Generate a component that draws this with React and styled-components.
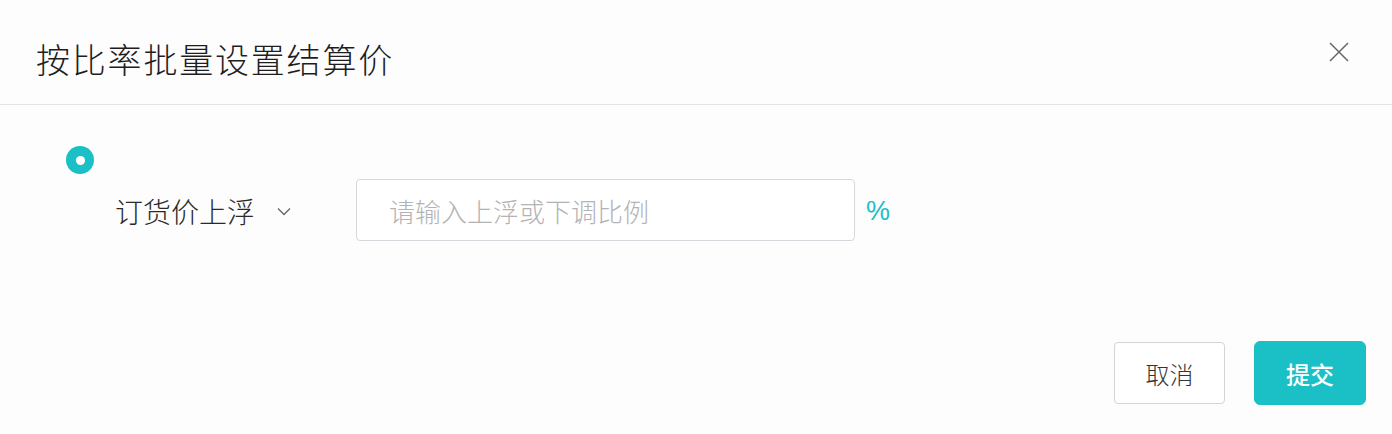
import React from "react";
import styled, { createGlobalStyle } from "styled-components";

const Global = createGlobalStyle`
  html, body { margin: 0; padding: 0; background: #fdfdfe; }
  body { font-family: "Noto Sans CJK SC", "Noto Sans", sans-serif; }
  * { box-sizing: border-box; }
`;

const TEAL = "#1bbfc6";

const Dialog = styled.div`
  width: 1392px;
  height: 434px;
  background: #fdfdfe;
  display: flex;
  flex-direction: column;
`;

const Header = styled.div`
  height: 105px;
  border-bottom: 1px solid #e4e5ea;
  display: flex;
  align-items: center;
  justify-content: space-between;
  padding: 14px 42px 0 36px;
`;

const Title = styled.h2`
  margin: 0;
  font-size: 34px;
  font-weight: 300;
  color: #1e1e1e;
  letter-spacing: 1.8px;
  line-height: 1;
`;

const Close = styled.button`
  border: 0;
  background: none;
  padding: 0;
  margin-bottom: 14px;
  width: 22px;
  height: 22px;
  display: flex;
  align-items: center;
  justify-content: center;
  cursor: pointer;
`;

const Body = styled.div`
  padding: 41px 0 0 66px;
  display: flex;
  flex-direction: column;
`;

const Radio = styled.span`
  width: 28px;
  height: 28px;
  border-radius: 50%;
  background: ${TEAL};
  display: flex;
  align-items: center;
  justify-content: center;
  &::after {
    content: "";
    width: 9px;
    height: 9px;
    border-radius: 50%;
    background: #fff;
  }
`;

const Row = styled.div`
  margin-top: 5px;
  display: flex;
  align-items: center;
`;

const Select = styled.div`
  width: 290px;
  padding-left: 49px;
  display: flex;
  align-items: center;
  gap: 22px;
  font-size: 28px;
  font-weight: 300;
  color: #2a2a2a;
  padding-top: 2px;
`;

const Input = styled.input`
  width: 499px;
  height: 62px;
  border: 1px solid #d6d7dc;
  border-radius: 4px;
  background: #fff;
  padding: 0 0 0 32px;
  font-family: inherit;
  font-size: 26px;
  font-weight: 300;
  color: #333;
  outline: none;
  &::placeholder { color: #b3b3b6; }
`;

const Unit = styled.span`
  margin-left: 11px;
  font-family: "Liberation Sans", Arial, sans-serif;
  font-size: 27px;
  color: ${TEAL};
  padding-top: 2px;
`;

const Footer = styled.div`
  margin-top: 101px;
  display: flex;
  justify-content: flex-end;
  gap: 29px;
  padding-right: 26px;
`;

const Button = styled.button`
  width: ${(p) => (p.$primary ? "112px" : "111px")};
  height: ${(p) => (p.$primary ? "64px" : "62px")};
  margin-top: ${(p) => (p.$primary ? "-1px" : "0")};
  border-radius: ${(p) => (p.$primary ? "6px" : "4px")};
  border: 1px solid ${(p) => (p.$primary ? TEAL : "#d3d4d8")};
  background: ${(p) => (p.$primary ? TEAL : "#fff")};
  color: ${(p) => (p.$primary ? "#fff" : "#333")};
  font-family: inherit;
  font-size: 24px;
  font-weight: ${(p) => (p.$primary ? 500 : 300)};
  cursor: pointer;
`;

export default function App() {
  return (
    <>
      <Global />
      <Dialog>
        <Header>
          <Title>按比率批量设置结算价</Title>
          <Close aria-label="关闭">
            <svg width="20" height="20" viewBox="0 0 20 20">
              <path d="M1 1L19 19M19 1L1 19" stroke="#666" strokeWidth="1.5" fill="none" />
            </svg>
          </Close>
        </Header>
        <Body>
          <Radio />
          <Row>
            <Select>
              <span>订货价上浮</span>
              <svg width="14" height="9" viewBox="0 0 14 9">
                <path d="M1 1.5L7 7.5L13 1.5" stroke="#666" strokeWidth="1.3" fill="none" />
              </svg>
            </Select>
            <Input placeholder="请输入上浮或下调比例" />
            <Unit>%</Unit>
          </Row>
        </Body>
        <Footer>
          <Button>取消</Button>
          <Button $primary>提交</Button>
        </Footer>
      </Dialog>
    </>
  );
}
